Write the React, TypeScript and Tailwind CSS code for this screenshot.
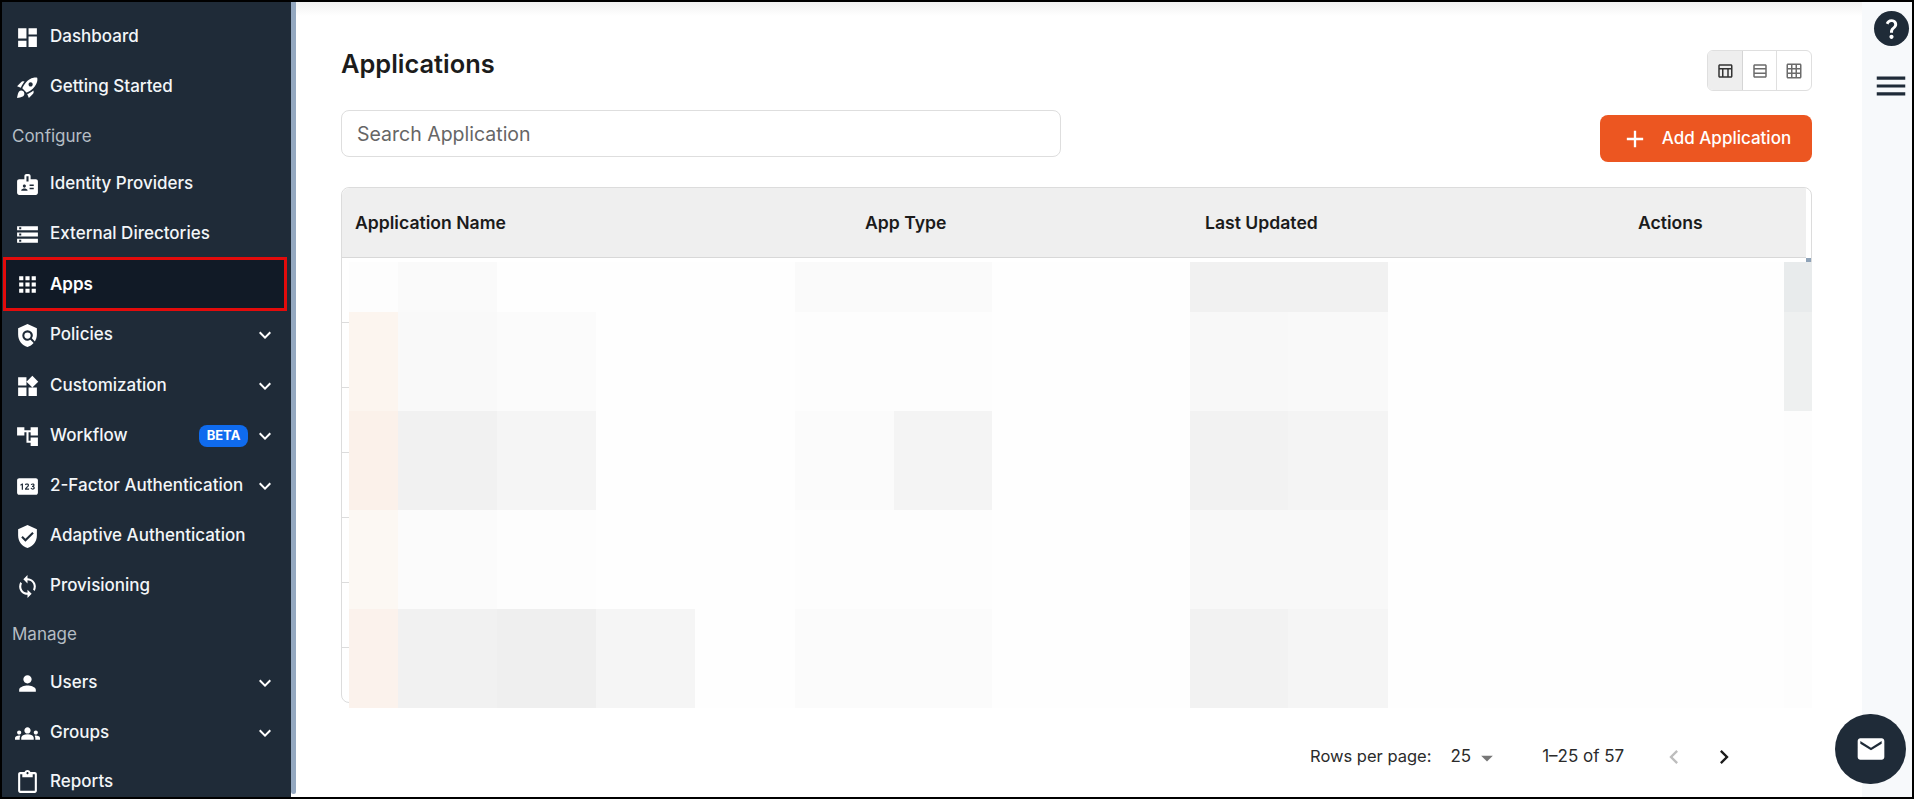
import React from "react";
import type { IconType } from "react-icons";
import {
  MdDashboard, MdRocketLaunch, MdBadge, MdStorage, MdApps, MdPolicy, MdWidgets, MdAccountTree, MdPin,
  MdVerifiedUser, MdSync, MdPerson, MdGroups, MdOutlineContentPaste, MdKeyboardArrowDown,
  MdOutlineTableChart, MdOutlineTableRows, MdOutlineGridOn, MdEmail, MdQuestionMark, MdMenu, MdAdd,
  MdChevronLeft, MdChevronRight, MdArrowDropDown,
} from "react-icons/md";

type Item = { label: string; icon: IconType; chevron?: boolean; beta?: boolean; extra?: string };

const NavRow = ({ item }: { item: Item }) => {
  const Icon = item.icon;
  return (
    <div className={`flex h-[50px] shrink-0 items-center pl-[13px] pr-[14px] text-[17px] font-medium text-[#f3f6f8] ${item.extra ?? ""}`}>
      <Icon className="h-[25px] w-[25px] shrink-0 text-white" />
      <span className="ml-[10px] whitespace-nowrap">{item.label}</span>
      <span className="flex-1" />
      {item.beta && (
        <span className="mr-[5px] flex h-[22px] w-[49px] items-center justify-center rounded-[8px] bg-[#0f6bee] text-[13px] font-bold text-white">BETA</span>
      )}
      {item.chevron && <MdKeyboardArrowDown className="h-[24px] w-[24px] shrink-0 text-white" />}
    </div>
  );
};

const Label = ({ children, extra }: { children: string; extra: string }) => (
  <div className={`flex h-[47px] shrink-0 items-center pl-[10px] text-[17px] text-[#b5bdc4] ${extra}`}>{children}</div>
);

const W = "bg-[#fefefe]";
const rows: string[][] = [
  ["bg-[#fdfdfd]", "bg-[#fafafa]", W, W, W, "bg-[#fafafa]", "bg-[#fafafa]", W, "bg-[#f1f1f1]", "bg-[#f1f1f1]", W, "bg-[#e8ebec]"],
  ["bg-[#fcf5ef]", "bg-[#f9f9f9]", "bg-[#fbfbfb]", W, W, "bg-[#fdfdfd]", "bg-[#fdfdfd]", W, "bg-[#f8f8f8]", "bg-[#f9f9f9]", W, "bg-[#eef0f0]"],
  ["bg-[#fbf1ea]", "bg-[#f1f1f1]", "bg-[#f5f5f5]", W, W, "bg-[#fbfbfb]", "bg-[#f4f4f4]", W, "bg-[#f2f2f2]", "bg-[#f4f4f4]", W, "bg-[#fdfdfd]"],
  ["bg-[#fcf8f3]", "bg-[#fbfbfb]", "bg-[#fdfdfd]", W, W, "bg-[#fdfdfd]", "bg-[#fdfdfd]", W, "bg-[#f8f8f8]", "bg-[#f8f8f8]", W, "bg-[#fdfdfd]"],
  ["bg-[#fbf2ec]", "bg-[#f1f1f1]", "bg-[#efefef]", "bg-[#f5f5f5]", W, "bg-[#fbfbfb]", "bg-[#fbfbfb]", W, "bg-[#f2f2f2]", "bg-[#f5f5f5]", W, "bg-[#fdfdfd]"],
];

export default function App() {
  return (
    <div className="relative flex h-[799px] w-[1914px] overflow-hidden border-2 border-black bg-white font-['Inter','Liberation_Sans',sans-serif] text-[#1b1b1b]">
      <aside className="flex w-[289px] shrink-0 flex-col overflow-hidden bg-[#1f2b38] pt-[10px]">
        <NavRow item={{ label: "Dashboard", icon: MdDashboard }} />
        <NavRow item={{ label: "Getting Started", icon: MdRocketLaunch }} />
        <Label extra="pt-[3px]">Configure</Label>
        <NavRow item={{ label: "Identity Providers", icon: MdBadge }} />
        <NavRow item={{ label: "External Directories", icon: MdStorage }} />
        <div className="mb-[-1px] ml-px mt-[-2px] flex h-[54px] w-[284px] shrink-0 items-center border-[3px] border-[#e30b0b] bg-[#111a26] pl-[9px] pt-[1px] text-[17px] font-semibold text-white">
          <MdApps className="h-[25px] w-[25px] shrink-0 text-white" />
          <span className="ml-[10px]">Apps</span>
        </div>
        <NavRow item={{ label: "Policies", icon: MdPolicy, chevron: true, extra: "mb-px" }} />
        <NavRow item={{ label: "Customization", icon: MdWidgets, chevron: true }} />
        <NavRow item={{ label: "Workflow", icon: MdAccountTree, chevron: true, beta: true }} />
        <NavRow item={{ label: "2-Factor Authentication", icon: MdPin, chevron: true }} />
        <NavRow item={{ label: "Adaptive Authentication", icon: MdVerifiedUser }} />
        <NavRow item={{ label: "Provisioning", icon: MdSync }} />
        <Label extra="pt-px">Manage</Label>
        <NavRow item={{ label: "Users", icon: MdPerson, chevron: true }} />
        <NavRow item={{ label: "Groups", icon: MdGroups, chevron: true, extra: "mb-[-1px]" }} />
        <NavRow item={{ label: "Reports", icon: MdOutlineContentPaste }} />
      </aside>
      <div className="mb-[3px] w-[5px] shrink-0 rounded-b-[3px] bg-[#94a8c0]" />

      <main className="relative flex min-w-0 flex-1 flex-col bg-white pl-[45px] pr-[50px]">
        <div className="pointer-events-none absolute inset-x-0 top-0 h-[14px] bg-gradient-to-b from-[#f1f1f1] to-white" />
        <div className="relative flex h-[108px] shrink-0">
          <div className="flex-1">
            <h1 className="mt-[46px] text-[25.4px] leading-[32px] font-semibold text-[#1c1c1c]">Applications</h1>
          </div>
          <div className="mt-[48px] flex h-[41px] w-[105px] overflow-hidden rounded-[6px] border border-[#dfdfdf] text-[#6b6b6b]">
            <div className="flex flex-1 items-center justify-center border-r border-[#d5d5d5] bg-[#eeeeee] text-[#333]"><MdOutlineTableChart className="h-[18px] w-[18px]" /></div>
            <div className="flex flex-1 items-center justify-center border-r border-[#dfdfdf]"><MdOutlineTableRows className="h-[18px] w-[18px]" /></div>
            <div className="flex flex-1 items-center justify-center"><MdOutlineGridOn className="h-[18px] w-[18px]" /></div>
          </div>
        </div>
        <div className="flex h-[77px] shrink-0 items-start justify-between">
          <div className="flex h-[47px] w-[720px] items-center rounded-[8px] border border-[#dedede] pl-[15px] pt-[2px] text-[19.5px] text-[#666]">Search Application</div>
          <div className="mt-[5px] flex h-[47px] w-[212px] items-center justify-center gap-[13px] rounded-[8px] bg-[#ec5621] text-[17px] font-medium text-white">
            <MdAdd className="h-[28px] w-[28px]" />
            <span>Add Application</span>
          </div>
        </div>

        <div className="relative h-[516px] shrink-0 rounded-[8px] border border-[#dcdcdc]">
          <div className="mr-[5px] flex h-[70px] items-center rounded-tl-[8px] border-b border-[#d8d8d8] bg-[#efefef] pl-[13px] pt-[2px] text-[17.6px] font-semibold text-[#1b1b1b]">
            <span className="w-[510px]">Application Name</span>
            <span className="w-[340px]">App Type</span>
            <span className="w-[433px]">Last Updated</span>
            <span>Actions</span>
          </div>
          <div className="flex flex-col">
            {[0, 1, 2, 3, 4, 5].map((r) => (
              <div key={r} className="h-[65px] border-b border-[#dcdcdc]" />
            ))}
          </div>
          <div className="absolute right-0 top-[70px] h-[4px] w-[5px] bg-[#8fa3b8]" />
          <div className="absolute left-[7px] right-[-1px] top-[74px] grid h-[446px] grid-cols-[49px_99px_99px_99px_100px_99px_98px_198px_98px_100px_396px_28px] grid-rows-[50px_99px_99px_99px_99px] bg-white">
            {rows.flatMap((row, r) => row.map((cls, c) => <div key={`${r}-${c}`} className={cls} />))}
          </div>
        </div>

        <div className="flex flex-1 items-start pt-[41px] text-[16.5px] text-[#2b2b2b]">
          <span className="ml-[969px] whitespace-nowrap">Rows per page:</span>
          <span className="ml-[19px] text-[17px]">25</span>
          <MdArrowDropDown className="ml-[2px] h-[28px] w-[28px] text-[#777]" />
          <span className="ml-[41px] whitespace-nowrap text-[17px]">1–25 of 57</span>
          <MdChevronLeft className="ml-[36px] -mt-px h-[28px] w-[28px] text-[#bdbdbd]" />
          <MdChevronRight className="ml-[22px] -mt-px h-[28px] w-[28px] text-[#1b1b1b]" />
        </div>
      </main>

      <div className="flex w-[50px] shrink-0 flex-col items-center bg-[#f7f9fb] pl-[8px] pt-[9px]">
        <div className="flex h-[35px] w-[35px] items-center justify-center rounded-full bg-[#1f2b38] text-white"><MdQuestionMark className="h-[25px] w-[25px]" /></div>
        <MdMenu className="mt-[21px] h-[38px] w-[38px] text-[#1f2b38]" />
      </div>

      <div className="absolute bottom-[13px] right-[6px] flex h-[70px] w-[71px] items-center justify-center rounded-full bg-[#1f2b38] text-white">
        <MdEmail className="h-[32px] w-[32px]" />
      </div>
    </div>
  );
}
